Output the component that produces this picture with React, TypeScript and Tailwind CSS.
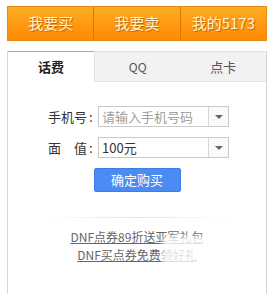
import React from 'react';

const FONT = { fontFamily: '"Microsoft YaHei", "Noto Sans CJK SC", "Liberation Sans", sans-serif' };

// ─── Dropdown field ───────────────────────────────────────────────────────────
const SelectField: React.FC<{ value: string; placeholder?: boolean }> = ({ value, placeholder }) => (
  <div className="flex w-[131px] h-[21px] border border-[#c8c8c8] bg-white">
    <span
      className={`flex-1 pl-[3px] text-[13px] leading-[19px] ${placeholder ? 'text-[#a0a0a0]' : 'text-[#333]'}`}
    >
      {value}
    </span>
    <span className="w-[20px] flex items-center justify-center border-l border-[#d8d8d8] bg-[#fafafa]">
      <span className="w-0 h-0 border-l-[4px] border-r-[4px] border-t-[4px] border-l-transparent border-r-transparent border-t-[#666]" />
    </span>
  </div>
);

const Row: React.FC<{ label: React.ReactNode; children: React.ReactNode }> = ({ label, children }) => (
  <div className="flex items-center">
    <span className="w-[50px] text-[13px] text-[#333] leading-[21px] flex">{label}</span>
    {children}
  </div>
);

export default function App() {
  return (
    <div className="relative w-[273px] h-[294px] overflow-hidden bg-white" style={FONT}>
      {/* Top nav */}
      <div className="ml-[7px] mt-[6px] w-[260px] h-[35px] flex border border-[#e88a10] bg-gradient-to-b from-[#ffab22] to-[#ff8a00]">
        {['我要买', '我要卖', '我的5173'].map((t, i) => (
          <div
            key={t}
            className={`flex-1 flex items-center justify-center text-[15px] text-[#fff3d2] ${i > 0 ? 'border-l border-[#d97a00]' : ''}`}
            style={{ textShadow: '1px 1px 1px #b86400' }}
          >
            {t}
          </div>
        ))}
      </div>

      {/* Tab panel */}
      <div className="ml-[7px] mt-[10px] w-[260px] h-[260px] border-l border-r border-[#d6d6d6]">
        <div className="flex h-[31px]">
          <div className="w-[86px] flex items-center justify-center bg-white border-t border-[#a8a8a8] text-[13px] font-bold text-[#222]">
            话费
          </div>
          <div className="flex-1 flex items-center justify-center bg-[#f2f2f2] border-t border-l border-b border-[#e2e2e2] text-[12px] text-[#555]">
            QQ
          </div>
          <div className="flex-1 flex items-center justify-center bg-[#f2f2f2] border-t border-b border-[#e2e2e2] text-[13px] text-[#555]">
            点卡
          </div>
        </div>

        <div className="flex flex-col pl-[40px] pt-[24px] gap-[10px]">
          <Row label={<>手机号<span className="ml-[2px]">:</span></>}>
            <SelectField value="请输入手机号码" placeholder />
          </Row>
          <Row
            label={
              <>
                面<span className="ml-[13px]">值</span>
                <span className="ml-[2px]">:</span>
              </>
            }
          >
            <SelectField value="100元" />
          </Row>
        </div>

        <div className="flex justify-center mt-[10px]">
          <button className="w-[87px] h-[24px] rounded-[2px] bg-[#4b8bf4] border border-[#3f7de6] text-white text-[13px] leading-[22px]">
            确定购买
          </button>
        </div>

        <div className="mx-[38px] mt-[25px] h-px bg-gradient-to-r from-transparent via-[#e4e4e4] to-transparent" />

        <div className="flex flex-col items-center mt-[10px] text-[12px] leading-[18px] text-[#666]">
          <span className="underline">DNF点券89折送亚军礼包</span>
          <span className="underline">DNF买点券免费领好礼</span>
        </div>
      </div>

      {/* whitish smudge covering part of the links */}
      <div className="absolute left-[162px] top-[236px] w-[84px] h-[46px] bg-white/80 rounded-[6px] blur-[2px]" />
    </div>
  );
}
